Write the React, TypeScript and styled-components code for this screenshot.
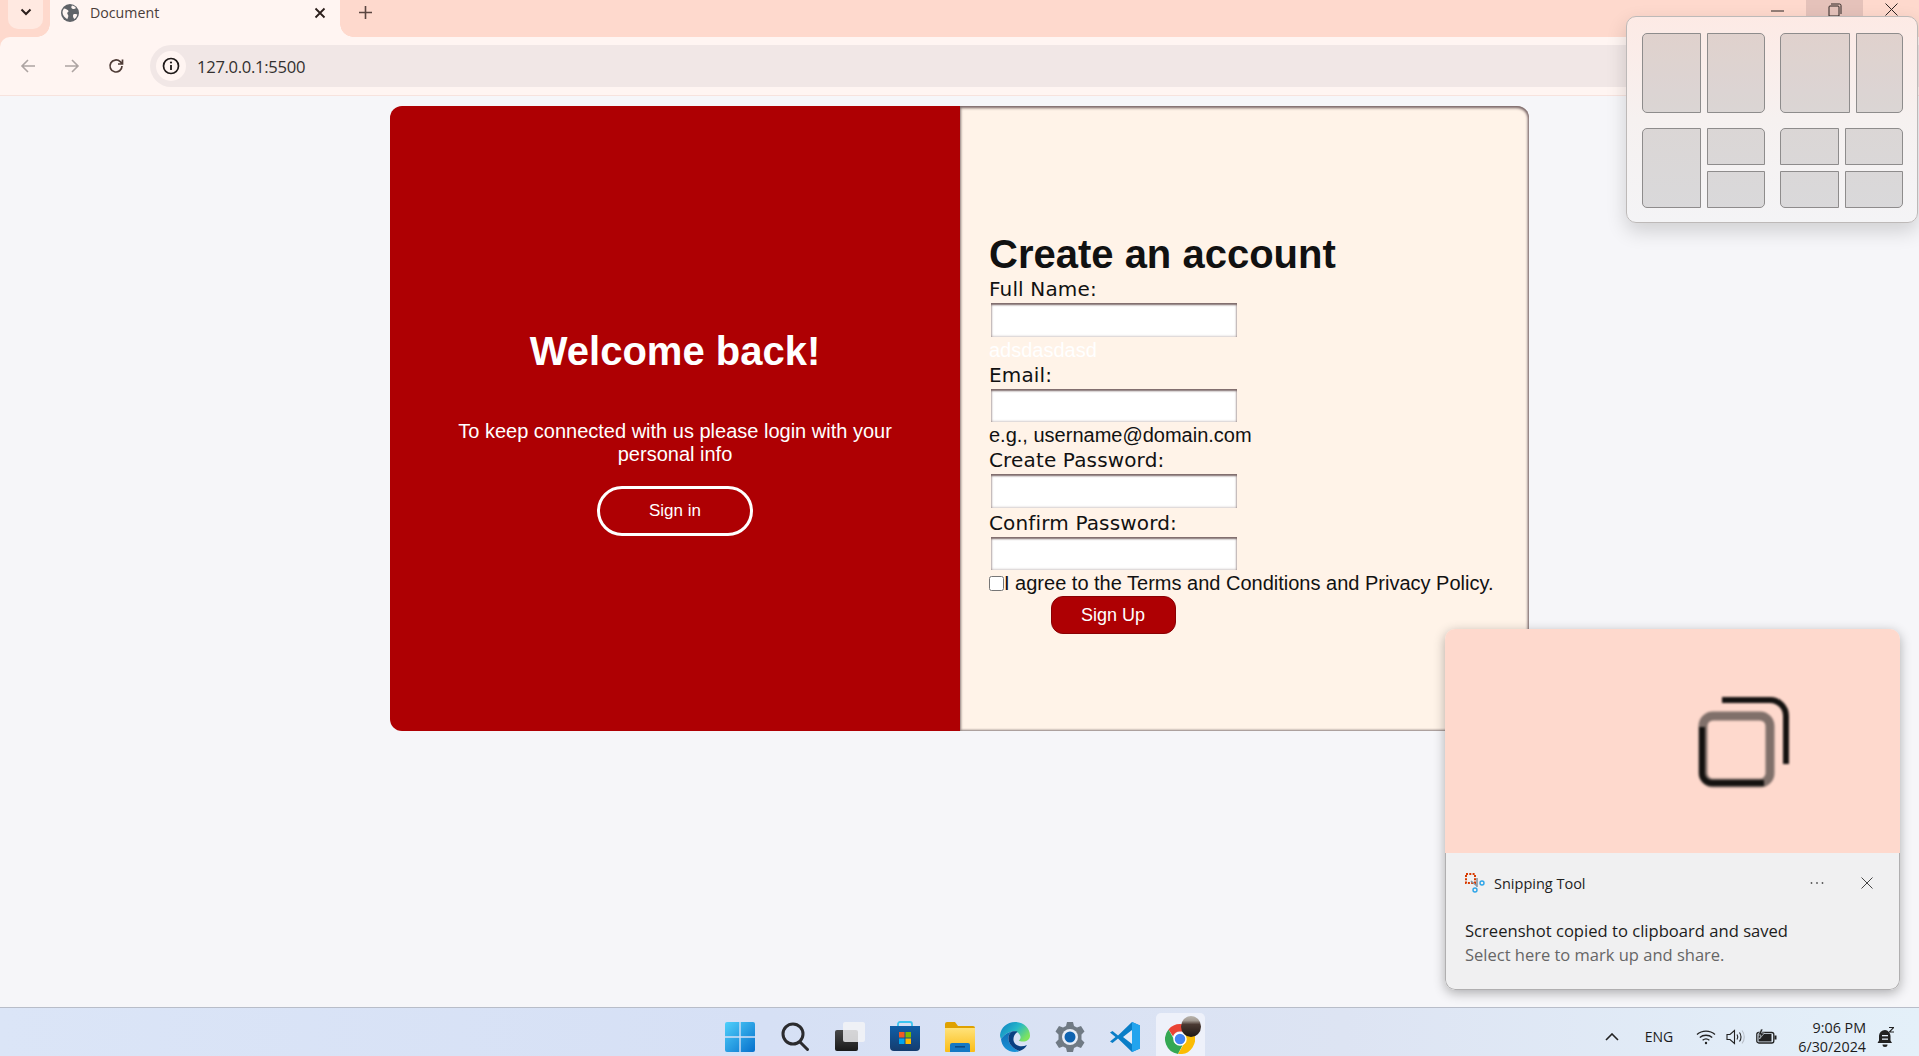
import styled, { createGlobalStyle } from "styled-components";

const GlobalStyle = createGlobalStyle`
  html, body {
    margin: 0;
    padding: 0;
    height: 100%;
    overflow: hidden;
    background: #f6f6f9;
  }
  #root {
    height: 100%;
  }
  * {
    box-sizing: border-box;
  }
`;

type Tile = { area: string; radius: string };

const r = "5px";

function WindowGrid({ cols, tiles }: { cols: string; tiles: Tile[] }) {
  return (
    <SnapGroup $cols={cols}>
      {tiles.map((t, i) => (
        <SnapTile key={i} $area={t.area} $radius={t.radius} />
      ))}
    </SnapGroup>
  );
}

const halves: Tile[] = [
  { area: "1 / 1 / 3 / 2", radius: `${r} 0 0 ${r}` },
  { area: "1 / 2 / 3 / 3", radius: `0 ${r} ${r} 0` },
];

const threeUp: Tile[] = [
  { area: "1 / 1 / 3 / 2", radius: `${r} 0 0 ${r}` },
  { area: "1 / 2 / 2 / 3", radius: `0 ${r} 0 0` },
  { area: "2 / 2 / 3 / 3", radius: `0 0 ${r} 0` },
];

const fourUp: Tile[] = [
  { area: "1 / 1 / 2 / 2", radius: `${r} 0 0 0` },
  { area: "1 / 2 / 2 / 3", radius: `0 ${r} 0 0` },
  { area: "2 / 1 / 3 / 2", radius: `0 0 0 ${r}` },
  { area: "2 / 2 / 3 / 3", radius: `0 0 ${r} 0` },
];

function Field({ label, id, short, spaced }: { label: string; id: string; short?: boolean; spaced?: boolean }) {
  return (
    <>
      <Label htmlFor={id} $spaced={spaced}>
        {label}
      </Label>
      <TextInput id={id} $short={short} type={id.includes("pw") ? "password" : "text"} />
    </>
  );
}

function App() {
  return (
    <Screen>
      <GlobalStyle />
      <BrowserChrome>
        <TabStrip>
          <TabMenu>
            <svg width="12" height="8" viewBox="0 0 12 8" fill="none" stroke="#2b1f1c" strokeWidth="2">
              <path d="M1.5 1.5 6 6l4.5-4.5" />
            </svg>
          </TabMenu>
          <Tab>
            <svg width="18" height="18" viewBox="0 0 18 18">
              <circle cx="9" cy="9" r="9" fill="#5f6368" />
              <path d="M3 4.5c2 .2 3 1 4 1.8 1 .9.3 2-.7 2.3-.4 1.2.6 2 1 3 .2.9-.4 2.3-1 3.6C3.500 13.500 1.500 11 1.500 8.500 1.500 7 2 5.700 3 4.500zM11 1.500c1.500.3 3 1.200 4 2.500-.7 1-2 1.300-3 1-.8-.3-1.500-.7-1.700-1.500-.1-.8.2-1.500.7-2zM13 10c1.200 0 2.500 0 3.300.5-.4 2-1.500 3.500-3 4.500-.8-.8-1.300-2-1.300-3 0-1 .4-1.700 1-2z" fill="#fff5f2" />
            </svg>
            <TabTitle>Document</TabTitle>
            <svg width="12" height="12" viewBox="0 0 12 12" stroke="#2b1f1c" strokeWidth="1.800">
              <path d="M1.500 1.500l9 9M10.500 1.500l-9 9" />
            </svg>
          </Tab>
          <NewTab>
            <svg width="13" height="13" viewBox="0 0 13 13" stroke="#5a4540" strokeWidth="1.600">
              <path d="M6.500 0v13M0 6.500h13" />
            </svg>
          </NewTab>
          <WinControls>
            <WinButton>
              <svg width="13" height="2" viewBox="0 0 13 2" stroke="#2c2422">
                <path d="M0 1h13" />
              </svg>
            </WinButton>
            <WinButton $hover>
              <svg width="14" height="14" viewBox="0 0 14 14" fill="none" stroke="#2c2422">
                <path d="M3 1h8.500A1.500 1.500 0 0 1 13 2.500V11M2 3h8a1 1 0 0 1 1 1v9H1V4a1 1 0 0 1 1-1z" />
              </svg>
            </WinButton>
            <WinButton>
              <svg width="13" height="13" viewBox="0 0 13 13" stroke="#2c2422">
                <path d="M.5.500l12 12M12.500.500l-12 12" />
              </svg>
            </WinButton>
          </WinControls>
        </TabStrip>

        <Toolbar>
          <NavIcons>
            <svg width="16" height="16" viewBox="0 0 16 16" fill="none" stroke="#ada4a2" strokeWidth="1.600">
              <path d="M15 8H2M8 2 2 8l6 6" />
            </svg>
            <svg width="16" height="16" viewBox="0 0 16 16" fill="none" stroke="#ada4a2" strokeWidth="1.600">
              <path d="M1 8h13M8 2l6 6-6 6" />
            </svg>
            <svg width="16" height="16" viewBox="0 0 16 16" fill="none" stroke="#4e3b36" strokeWidth="1.700">
              <path d="M14 8a6 6 0 1 1-1.800-4.300L14.500 6M14.500 1.500V6H10" />
            </svg>
          </NavIcons>
          <Omnibox>
            <SiteInfo>
              <svg width="18" height="18" viewBox="0 0 18 18" fill="none">
                <circle cx="9" cy="9" r="7.500" stroke="#1f1a19" strokeWidth="1.700" />
                <path d="M9 8v5" stroke="#1f1a19" strokeWidth="1.800" />
                <circle cx="9" cy="5.500" r="1.100" fill="#1f1a19" />
              </svg>
            </SiteInfo>
            <Url>127.0.0.1:5500</Url>
          </Omnibox>
        </Toolbar>
      </BrowserChrome>

      <Page>
        <Card>
          <WelcomePanel>
            <WelcomeTitle>Welcome back!</WelcomeTitle>
            <WelcomeText>To keep connected with us please login with your personal info</WelcomeText>
            <SignInButton>Sign in</SignInButton>
          </WelcomePanel>
          <FormPanel>
            <FormTitle>Create an account</FormTitle>
            <Form>
              <Field label="Full Name:" id="name" />
              <Hint $ghost>adsdasdasd</Hint>
              <Field label="Email:" id="email" short />
              <Hint $ghost={false}>e.g., username@domain.com</Hint>
              <Field label="Create Password:" id="pw1" />
              <Field label="Confirm Password:" id="pw2" short spaced />
              <Agree>
                <Check type="checkbox" />I agree to the Terms and Conditions and Privacy Policy.
              </Agree>
              <SignUpButton>Sign Up</SignUpButton>
            </Form>
          </FormPanel>
        </Card>
      </Page>

      <Taskbar>
        <span />
        <TaskIcons>
          <TaskSlot>
            <svg width="30" height="30" viewBox="0 0 30 30">
              <defs>
                <linearGradient id="win" x1="0" y1="0" x2="1" y2="1">
                  <stop offset="0" stopColor="#4fd0fb" />
                  <stop offset="1" stopColor="#0670cc" />
                </linearGradient>
              </defs>
              <path d="M2 0h12.300v14.300H0V2a2 2 0 0 1 2-2zM15.700 0H28a2 2 0 0 1 2 2v12.300H15.700zM0 15.700h14.300V30H2a2 2 0 0 1-2-2zM15.700 15.700H30V28a2 2 0 0 1-2 2H15.700z" fill="url(#win)" />
            </svg>
          </TaskSlot>
          <TaskSlot>
            <svg width="30" height="30" viewBox="0 0 30 30" fill="none" stroke="#2b2b2e" strokeWidth="3">
              <circle cx="13" cy="12" r="10" />
              <path d="M20 20l7.500 7.500" strokeLinecap="round" />
            </svg>
          </TaskSlot>
          <TaskSlot>
            <svg width="30" height="30" viewBox="0 0 30 30">
              <defs>
                <linearGradient id="tvDark" x1="0" y1="0" x2="0" y2="1">
                  <stop offset="0" stopColor="#4a4a4a" />
                  <stop offset="1" stopColor="#191919" />
                </linearGradient>
              </defs>
              <rect x="0" y="8" width="23" height="21" rx="2" fill="url(#tvDark)" />
              <rect x="8" y="0" width="22" height="20" rx="2" fill="#f4f4f6" fillOpacity=".82" />
            </svg>
          </TaskSlot>
          <TaskSlot>
            <svg width="30" height="31" viewBox="0 0 30 31">
              <defs>
                <linearGradient id="store" x1="0" y1="0" x2="0" y2="1">
                  <stop offset="0" stopColor="#0f5fa8" />
                  <stop offset="1" stopColor="#153c6e" />
                </linearGradient>
              </defs>
              <path d="M8 6V3a2 2 0 0 1 2-2h10a2 2 0 0 1 2 2v3" fill="none" stroke="#3ec5f0" strokeWidth="1.800" />
              <path d="M0 5h30v21a4 4 0 0 1-4 4H4a4 4 0 0 1-4-4z" fill="url(#store)" />
              <rect x="9" y="11" width="5.500" height="5.500" fill="#f05a24" />
              <rect x="15.500" y="11" width="5.500" height="5.500" fill="#7fba00" />
              <rect x="9" y="17.500" width="5.500" height="5.500" fill="#00a4ef" />
              <rect x="15.500" y="17.500" width="5.500" height="5.500" fill="#ffb900" />
            </svg>
          </TaskSlot>
          <TaskSlot>
            <svg width="30" height="30" viewBox="0 0 30 30">
              <defs>
                <linearGradient id="folder" x1="0" y1="0" x2="0" y2="1">
                  <stop offset="0" stopColor="#ffe27a" />
                  <stop offset="1" stopColor="#fbbd16" />
                </linearGradient>
              </defs>
              <path d="M0 2a2 2 0 0 1 2-2h8l3 4h15a2 2 0 0 1 2 2v4H0z" fill="#dfa100" />
              <path d="M0 6h30v23a1 1 0 0 1-1 1H1a1 1 0 0 1-1-1z" fill="url(#folder)" />
              <path d="M5 23a2 2 0 0 1 2-2h16a2 2 0 0 1 2 2v7H5z" fill="#1479c4" />
              <rect x="10" y="24" width="10" height="1.600" fill="#0b4b86" />
            </svg>
          </TaskSlot>
          <TaskSlot>
            <svg width="30" height="30" viewBox="0 0 30 30">
              <defs>
                <linearGradient id="edgeA" x1="0" y1="0" x2="1" y2=".6">
                  <stop offset="0" stopColor="#0c7cc4" />
                  <stop offset=".55" stopColor="#26b7c8" />
                  <stop offset="1" stopColor="#7ee35f" />
                </linearGradient>
                <linearGradient id="edgeB" x1="0" y1="0" x2="0" y2="1">
                  <stop offset="0" stopColor="#0f6cb4" />
                  <stop offset="1" stopColor="#1a94d8" />
                </linearGradient>
              </defs>
              <path d="M15 0c8.500 0 15 6 15 13.500 0 4-3.300 6-7 6-2 0-3.500-.4-4.300-1 2-1.400 2.500-3.800 1-5.800C18.200 10 15 9 12 9.500 6.500 10.500 3.500 14 1 17 .3 15.700 0 14.500 0 13 1 5.500 7 0 15 0z" fill="url(#edgeA)" />
              <path d="M1 17C3.500 14 6.500 10.500 12 9.500c-2.500 1.500-4 4.500-3.500 8 .6 5 5 9.500 11 11.500-1.400.7-3 1-4.500 1C7 30 1.500 24 1 17z" fill="url(#edgeB)" />
              <path d="M12 9.500c-2.500 1.500-4 4.500-3.500 8 .6 5 5 9.500 11 11.500 3.300-1 6-3.300 7.500-6-5 2.500-11 1.500-13-3-1.500-3.500 0-8 3.700-10.300C16 9 14 9.200 12 9.500z" fill="#0a3f80" />
            </svg>
          </TaskSlot>
          <TaskSlot>
            <svg width="30" height="30" viewBox="0 0 30 30">
              <path d="M12 0h6l1 4 3 1.500L26 4l3.500 5.500-3 3v5l3 3L26 26l-4-1.500-3 1.500-1 4h-6l-1-4-3-1.500L4 26 .5 20.500l3-3v-5l-3-3L4 4l4 1.500L11 4z" fill="#707a84" />
              <circle cx="15" cy="15" r="8" fill="#e9eef8" />
              <circle cx="15" cy="15" r="5.500" fill="#0f63b0" />
            </svg>
          </TaskSlot>
          <TaskSlot>
            <svg width="30" height="30" viewBox="0 0 30 30">
              <path d="M22 0l8 3.500v23L22 30 8 16.500 2.500 21 0 19.500 5.500 15 0 10.500 2.500 9 8 13.500z" fill="#0a7ec7" />
              <path d="M22 0l8 3.500v23L22 30z" fill="#22a4ee" />
              <path d="M22 8v14l-9-7z" fill="#e3ebf8" />
            </svg>
          </TaskSlot>
          <ActiveSlot>
            <svg width="30" height="30" viewBox="0 0 30 30">
              <path d="M15 0a15 15 0 0 1 13 7.500H15a7.500 7.500 0 0 0-7 4.700L3.500 5.500A15 15 0 0 1 15 0z" fill="#ea4335" />
              <path d="M3.500 5.500 8.800 15a7.500 7.500 0 0 0 8.800 6.100L13 29.900A15 15 0 0 1 3.500 5.500z" fill="#34a853" />
              <path d="M28 7.500A15 15 0 0 1 13 29.900l5.500-9.500a7.500 7.500 0 0 0 .3-10.300z" fill="#fbbc04" />
              <circle cx="15" cy="15" r="6" fill="#4285f4" stroke="#fff" strokeWidth="1.500" />
            </svg>
            <Avatar />
          </ActiveSlot>
        </TaskIcons>
        <Tray>
          <svg width="14" height="8" viewBox="0 0 14 8" fill="none" stroke="#222" strokeWidth="1.600">
            <path d="M1 7l6-6 6 6" />
          </svg>
          <Lang>ENG</Lang>
          <TrayIcons>
            <svg width="20" height="16" viewBox="0 0 20 16" fill="none" stroke="#222" strokeWidth="1.300">
              <path d="M1 5.500c5-4.600 13-4.600 18 0M3.800 8.500c3.400-3 9-3 12.400 0M6.600 11.300c2-1.600 4.800-1.600 6.800 0" />
              <circle cx="10" cy="14" r="1.200" fill="#222" stroke="none" />
            </svg>
            <svg width="20" height="16" viewBox="0 0 20 16" fill="none" stroke="#222" strokeWidth="1.100">
              <path d="M1 5.500h3L8.500 1.500v13L4 10.500H1zM11 5.500c1 1.500 1 3.500 0 5M13.500 3.500c2 2.500 2 6.500 0 9" />
              <path d="M16 1.500c3 3.500 3 9.500 0 13" stroke="#b9bfc9" />
            </svg>
            <svg width="21" height="16" viewBox="0 0 21 16">
              <rect x=".8" y="3.500" width="17" height="10.500" rx="2" fill="none" stroke="#222" strokeWidth="1.300" />
              <rect x="2.500" y="5" width="13" height="7.500" fill="#222" />
              <rect x="18.500" y="6.500" width="2" height="4" fill="#222" />
              <path d="M5 0 2 6h3L3.500 10l5-6H5.500L7 0z" fill="#222" stroke="#e4eef8" strokeWidth=".6" />
            </svg>
          </TrayIcons>
          <Clock>
            <div>9:06 PM</div>
            <div>6/30/2024</div>
          </Clock>
          <svg width="18" height="22" viewBox="0 0 18 22">
            <path d="M8 4a6 6 0 0 0-6 6v4.500L.5 17h14.500L13.500 14.500V10A6 6 0 0 0 8 4z" fill="#222" />
            <path d="M5.500 18.500h5a2.500 2.500 0 0 1-5 0z" fill="#222" />
            <rect x="5" y="9" width="6" height="1.300" fill="#e4eef8" />
            <rect x="5" y="12.500" width="6" height="1.300" fill="#e4eef8" />
            <path d="M12 1h5v1l-3.400 3.400H17v1h-5v-1l3.400-3.400H12z" fill="#222" />
          </svg>
        </Tray>
      </Taskbar>

      <SnapPopup>
        <WindowGrid cols="58.500px 58px" tiles={halves} />
        <WindowGrid cols="70px 47px" tiles={halves} />
        <WindowGrid cols="58.500px 58px" tiles={threeUp} />
        <WindowGrid cols="58.500px 58px" tiles={fourUp} />
      </SnapPopup>

      <Toast>
        <ToastPreview>
          <PreviewIcon viewBox="0 0 94 91" fill="none">
            <path d="M24 3h48a16 16 0 0 1 16 16v48" stroke="#141210" strokeWidth="6" />
            <rect x="5" y="19" width="67" height="67" rx="10" stroke="#80706a" strokeWidth="9" />
            <path d="M4 30v46a10 10 0 0 0 10 10h52" stroke="#141210" strokeWidth="6" />
          </PreviewIcon>
        </ToastPreview>
        <ToastBody>
          <ToastHead>
            <svg width="20" height="20" viewBox="0 0 20 20" fill="none">
              <rect x="1" y="1" width="9" height="9" stroke="#d83b01" strokeWidth="2" strokeDasharray="2 1.300" />
              <path d="M6 8l6 5M12 5v9" stroke="#8a96a3" strokeWidth="1.600" />
              <circle cx="17" cy="10" r="2" stroke="#2da4e8" strokeWidth="1.400" />
              <circle cx="10" cy="17" r="2" stroke="#2da4e8" strokeWidth="1.400" />
            </svg>
            <AppName>Snipping Tool</AppName>
            <ToastActions>
              <svg width="14" height="4" viewBox="0 0 14 4" fill="#555">
                <circle cx="1.500" cy="2" r=".9" />
                <circle cx="7" cy="2" r=".9" />
                <circle cx="12.500" cy="2" r=".9" />
              </svg>
              <svg width="12" height="12" viewBox="0 0 12 12" stroke="#444">
                <path d="M.5.500l11 11M11.500.500l-11 11" />
              </svg>
            </ToastActions>
          </ToastHead>
          <ToastTitle>Screenshot copied to clipboard and saved</ToastTitle>
          <ToastSub>Select here to mark up and share.</ToastSub>
        </ToastBody>
      </Toast>
    </Screen>
  );
}

export default App;

const Screen = styled.div`
  height: 100%;
  display: flex;
  flex-direction: column;
  position: relative;
  overflow: hidden;
`;

const BrowserChrome = styled.div`
  flex: none;
  background: #fed9cd;
`;

const TabStrip = styled.div`
  height: 37px;
  display: flex;
  align-items: flex-start;
  padding-left: 8px;
`;

const TabMenu = styled.div`
  width: 35px;
  height: 29px;
  background: #ffe9e1;
  border-radius: 0 0 10px 10px;
  display: flex;
  align-items: center;
  justify-content: center;
  padding-bottom: 5px;
`;

const Tab = styled.div`
  margin-left: 7px;
  width: 290px;
  height: 37px;
  background: #fff5f2;
  display: flex;
  align-items: center;
  padding: 0 14px 12px 11px;
  gap: 11px;
  position: relative;

  &::before,
  &::after {
    content: "";
    position: absolute;
    bottom: 0;
    width: 13px;
    height: 13px;
  }
  &::before {
    left: -13px;
    background: radial-gradient(circle at 0 0, transparent 12.500px, #fff5f2 13px);
  }
  &::after {
    right: -13px;
    background: radial-gradient(circle at 100% 0, transparent 12.500px, #fff5f2 13px);
  }
`;

const TabTitle = styled.div`
  flex: 1;
  font: 14.200px "Open Sans", sans-serif;
  color: #4a3d3a;
`;

const NewTab = styled.div`
  margin-left: 19px;
  height: 25px;
  display: flex;
  align-items: center;
`;

const WinControls = styled.div`
  margin-left: auto;
  display: flex;
`;

const WinButton = styled.div<{ $hover?: boolean }>`
  width: 57px;
  height: 18px;
  padding-top: 3px;
  display: flex;
  justify-content: center;
  align-items: flex-start;
  background: ${({ $hover }) => ($hover ? "#e5c2ba" : "transparent")};
  &:first-child svg {
    margin-top: 7px;
  }
  &:last-child {
    width: 56px;
  }
`;

const Toolbar = styled.div`
  height: 59px;
  background: #fff5f2;
  border-bottom: 1px solid #f7e3de;
  border-radius: 10px 0 0 0;
  display: flex;
  align-items: center;
  padding-left: 20px;
`;

const NavIcons = styled.div`
  display: flex;
  gap: 28px;
  padding-right: 26px;
`;

const Omnibox = styled.div`
  flex: 1;
  height: 42px;
  background: #f1e7e6;
  border-radius: 21px 0 0 21px;
  display: flex;
  align-items: center;
  padding-left: 6px;
  gap: 11px;
`;

const SiteInfo = styled.div`
  width: 30px;
  height: 30px;
  border-radius: 50%;
  background: #fff5f2;
  display: flex;
  align-items: center;
  justify-content: center;
`;

const Url = styled.div`
  font: 16.600px "Open Sans", sans-serif;
  letter-spacing: -0.300px;
  color: #33302f;
`;

const Page = styled.div`
  flex: 1;
  background: #f6f6f9;
  padding: 10px 0 0 390px;
`;

const Card = styled.div`
  width: 1139px;
  height: 625px;
  display: flex;
`;

const WelcomePanel = styled.div`
  width: 570px;
  background: #ae0003;
  border-radius: 12px 0 0 12px;
  color: #fff;
  font-family: "Liberation Sans", Arial, sans-serif;
  display: flex;
  flex-direction: column;
  align-items: center;
  padding-top: 220px;
`;

const WelcomeTitle = styled.h1`
  margin: 0;
  font-size: 40px;
  line-height: 50px;
  font-weight: 700;
`;

const WelcomeText = styled.p`
  margin: 44px 0 0;
  width: 450px;
  font-size: 20px;
  line-height: 23px;
  text-align: center;
`;

const SignInButton = styled.button`
  margin-top: 20px;
  width: 156px;
  height: 50px;
  background: transparent;
  border: 3px solid #fff;
  border-radius: 25px;
  color: #fff;
  font: 17px "Liberation Sans", Arial, sans-serif;
`;

const FormPanel = styled.div`
  flex: 1;
  background: #fff3e8;
  border-radius: 0 12px 12px 0;
  box-shadow: inset 0 2px 3px #7d6a6a, inset -1px 0 3px #86767a, inset 1px 0 3px #c9bdb4, inset 0 -1px 2px #b5aaa4;
  padding: 125px 0 0 29px;
  color: #111;
  font-family: "Liberation Sans", Arial, sans-serif;
`;

const FormTitle = styled.h2`
  margin: 0;
  font-size: 40px;
  line-height: 46px;
  font-weight: 700;
`;

const Form = styled.form`
  width: 250px;
  display: flex;
  flex-direction: column;
  align-items: flex-start;
`;

const Label = styled.label<{ $spaced?: boolean }>`
  font: 20px/24px "DejaVu Sans", Verdana, sans-serif;
  letter-spacing: 0.150px;
  white-space: nowrap;
  margin-top: ${({ $spaced }) => ($spaced ? "2px" : "0")};
  margin-bottom: 2px;
`;

const TextInput = styled.input<{ $short?: boolean }>`
  width: 246px;
  height: ${({ $short }) => ($short ? "33px" : "34px")};
  margin: 0 0 1px 2px;
  border: none;
  background: #fff;
  box-shadow: inset 0 2px 2px #7d6a6a, inset 0 0 3px #a89a9a;
  padding: 0;
`;

const Hint = styled.div<{ $ghost: boolean }>`
  font-size: 20px;
  line-height: 24px;
  margin-bottom: 1px;
  white-space: nowrap;
  color: ${({ $ghost }) => ($ghost ? "#fff" : "#111")};
`;

const Agree = styled.label`
  display: flex;
  align-items: center;
  font-size: 20px;
  line-height: 24px;
  white-space: nowrap;
`;

const Check = styled.input`
  width: 15px;
  height: 15px;
  margin: 0;
`;

const SignUpButton = styled.button`
  align-self: center;
  margin: 1px 2px 0 0;
  width: 125px;
  height: 38px;
  border: 1px solid #8a0003;
  border-radius: 12px;
  background: #ae0003;
  color: #fff;
  font: 18px "Liberation Sans", Arial, sans-serif;
`;

const Taskbar = styled.div`
  height: 49px;
  flex: none;
  border-top: 1px solid #b8bdc9;
  background: linear-gradient(90deg, #dbe5f7 0%, #d6e0f5 40%, #dde4f3 70%, #e4f0f9 100%);
  display: grid;
  grid-template-columns: 1fr auto 1fr;
  align-items: end;
`;

const TaskIcons = styled.div`
  display: flex;
  align-items: flex-end;
  padding-right: 2px;
`;

const TaskSlot = styled.div`
  width: 55px;
  height: 47px;
  display: flex;
  align-items: flex-end;
  justify-content: center;
  padding-bottom: 4px;
`;

const ActiveSlot = styled(TaskSlot)`
  position: relative;
  width: 49px;
  height: 43px;
  margin-left: 3px;
  background: #eef1fa;
  border-radius: 5px 5px 0 0;
  padding-bottom: 2px;
`;

const Avatar = styled.div`
  position: absolute;
  top: 3px;
  left: 25px;
  width: 20px;
  height: 21px;
  border-radius: 50%;
  background: linear-gradient(180deg, #b9b5ae 0%, #a39a92 22%, #4b3a33 40%, #1e1714 100%);
`;

const Tray = styled.div`
  display: flex;
  align-items: center;
  justify-content: flex-end;
  align-self: stretch;
  padding: 9px 24px 0 0;
  color: #1c1c1c;
  font-family: "Open Sans", sans-serif;
`;

const Lang = styled.div`
  margin-left: 26px;
  font-size: 14px;
`;

const TrayIcons = styled.div`
  margin-left: 23px;
  display: flex;
  gap: 10px;
  align-items: center;
`;

const Clock = styled.div`
  margin: 0 11px 0 21px;
  text-align: right;
  font-size: 14.300px;
  line-height: 19px;
`;

const SnapPopup = styled.div`
  position: absolute;
  left: 1626px;
  top: 16px;
  width: 292px;
  height: 207px;
  padding: 16px 14px 16px 15px;
  border: 1px solid #bdb9b8;
  border-radius: 10px;
  background: linear-gradient(180deg, #fdeae5 0%, #f6f1f0 50%, #f4f4f6 100%);
  box-shadow: 0 8px 20px rgba(0, 0, 0, 0.16);
  display: grid;
  grid-template-columns: auto auto;
  grid-template-rows: 80px 80px;
  justify-content: space-between;
  row-gap: 15px;
`;

const SnapGroup = styled.div<{ $cols: string }>`
  display: grid;
  grid-template-columns: ${({ $cols }) => $cols};
  grid-template-rows: 1fr 1fr;
  gap: 6px;
`;

const SnapTile = styled.div<{ $area: string; $radius: string }>`
  grid-area: ${({ $area }) => $area};
  border: 1px solid #8e8c8c;
  border-radius: ${({ $radius }) => $radius};
  background: rgba(0, 0, 0, 0.11);
`;

const Toast = styled.div`
  position: absolute;
  left: 1445px;
  top: 629px;
  width: 455px;
  height: 361px;
  border-radius: 10px;
  overflow: hidden;
  box-shadow: 0 3px 12px rgba(0, 0, 0, 0.3);
  display: flex;
  flex-direction: column;
`;

const ToastPreview = styled.div`
  height: 224px;
  background: #fed9cd;
  display: flex;
  justify-content: flex-end;
  padding: 68px 108px 0 0;
`;

const PreviewIcon = styled.svg`
  width: 94px;
  height: 91px;
  filter: blur(1px);
`;

const ToastBody = styled.div`
  flex: 1;
  background: #f0f0f1;
  border: 1px solid #b0afb0;
  border-top: none;
  border-radius: 0 0 10px 10px;
  padding: 18px 22px 0 19px;
  font-family: "Open Sans", sans-serif;
`;

const ToastHead = styled.div`
  display: flex;
  align-items: center;
  gap: 9px;
  height: 24px;
`;

const AppName = styled.div`
  font-size: 14.500px;
  color: #222;
`;

const ToastActions = styled.div`
  margin-left: auto;
  display: flex;
  align-items: center;
  gap: 37px;
  padding-right: 4px;
`;

const ToastTitle = styled.div`
  margin-top: 24px;
  font-size: 16.600px;
  line-height: 24px;
  color: #1c1c1c;
`;

const ToastSub = styled.div`
  font-size: 16.500px;
  line-height: 24px;
  color: #666;
`;
